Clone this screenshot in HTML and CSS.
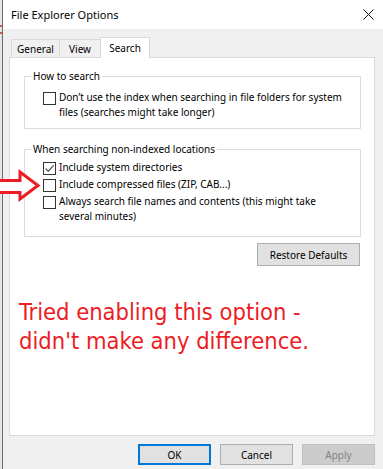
FILE: index.html
```html
<!DOCTYPE html>
<html>
<head>
<meta charset="utf-8">
<link rel="stylesheet" href="styles.css">
</head>
<body>
<div class="screen">
  <div class="strip"><span class="mark mark-a"></span><span class="mark mark-b"></span></div>
  <div class="window">
    <div class="titlebar">
      <span class="title">File Explorer Options</span>
      <svg class="close" viewBox="0 0 11 11" width="11" height="11"><path d="M0.5 0.5 L10.5 10.5 M10.5 0.5 L0.5 10.5" stroke="#111" stroke-width="1" fill="none"/></svg>
    </div>
    <div class="body">
      <div class="tabs">
        <div class="tab tab-general">General</div>
        <div class="tab tab-view">View</div>
        <div class="tab tab-search active">Search</div>
      </div>
      <div class="panel">
        <fieldset class="group g1">
          <legend>How to search</legend>
          <div class="opts">
            <div class="opt"><span class="cb"></span><span class="lbl">Don’t use the index when searching in file folders for system<br>files (searches might take longer)</span></div>
          </div>
        </fieldset>
        <fieldset class="group g2">
          <legend>When searching non-indexed locations</legend>
          <div class="opts">
            <div class="opt"><span class="cb checked"><svg viewBox="0 0 11 11" width="11" height="11"><path d="M1.5 5.5 L4.2 8.2 L9.6 2.4" stroke="#5a5a5a" stroke-width="1.3" fill="none"/></svg></span><span class="lbl">Include system directories</span></div>
            <div class="opt"><span class="cb"></span><span class="lbl">Include compressed files (ZIP, CAB...)</span></div>
            <div class="opt"><span class="cb"></span><span class="lbl">Always search file names and contents (this might take<br>several minutes)</span></div>
          </div>
        </fieldset>
        <div class="restore-row"><button class="btn restore">Restore Defaults</button></div>
        <p class="note">Tried enabling this option -<br>didn't make any difference.</p>
      </div>
      <div class="footer">
        <button class="btn ok">OK</button>
        <button class="btn">Cancel</button>
        <button class="btn disabled">Apply</button>
      </div>
    </div>
  </div>
  <svg class="arrow" viewBox="0 0 44 36" width="44" height="36"><polygon points="-3,12.5 20,12.5 20,4 38,17.5 20,31 20,24.5 -3,24.5" fill="#fff" stroke="#ed1c24" stroke-width="3" stroke-miterlimit="3"/></svg>
</div>
</body>
</html>
```
FILE: styles.css
```css
body {
  margin: 0;
  width: 383px;
  height: 469px;
  overflow: hidden;
  font-family: "Noto Sans", sans-serif;
  font-size: 10px;
  color: #000;
}
.screen {
  position: relative;
  display: flex;
  height: 469px;
  background: #e6e6e6;
}
.strip {
  width: 2px;
  flex: none;
  position: relative;
}
.mark {
  position: absolute;
  left: 0;
  width: 2px;
  height: 2px;
  background: #d9534f;
}
.mark-a { top: 25px; }
.mark-b { top: 32px; }
.window {
  flex: 1;
  display: flex;
  flex-direction: column;
  background: #f0f0f0;
  border-left: 1px solid #6d6d6d;
}
.titlebar {
  height: 29px;
  flex: none;
  background: #fff;
  display: flex;
  align-items: center;
  padding-left: 8px;
  font-size: 11px;
}
.close {
  margin-left: auto;
  margin-right: 9px;
}
.body {
  padding: 8px 8px 0 6px;
  display: flex;
  flex-direction: column;
}
.tabs {
  display: flex;
  align-items: flex-end;
  height: 20px;
  padding-left: 2px;
}
.tab {
  height: 18px;
  box-sizing: border-box;
  border: 1px solid #d9d9d9;
  border-bottom: none;
  background: #f0f0f0;
  display: flex;
  align-items: center;
  justify-content: center;
}
.tab-general { width: 49px; }
.tab-view { width: 41px; border-left: none; }
.tab-search { width: 50px; margin-left: -1px; }
.tab.active {
  height: 21px;
  margin-bottom: -1px;
  background: #fff;
  position: relative;
  z-index: 1;
}
.panel {
  height: 379px;
  box-sizing: border-box;
  border: 1px solid #d9d9d9;
  background: #fff;
  display: flex;
  flex-direction: column;
}
.group {
  margin: 0 13px 0 14px;
  border: 1px solid #dcdcdc;
  padding: 0;
  min-width: 0;
}
.g1 { margin-top: 11px; }
.g2 { margin-top: 13px; }
legend {
  padding: 0 2px;
  margin-left: 6px;
  line-height: 15px;
}
.opts {
  padding: 6px 0 8px 18px;
  display: flex;
  flex-direction: column;
  gap: 2px;
}
.g2 .opts { padding: 3px 0 12px 18px; }
.opt {
  display: flex;
  align-items: flex-start;
  line-height: 15px;
  white-space: nowrap;
}
.cb {
  width: 13px;
  height: 13px;
  box-sizing: border-box;
  border: 1px solid #333;
  background: #fff;
  margin-top: 2px;
  margin-right: 3px;
  flex: none;
  display: flex;
}
.restore-row {
  display: flex;
  justify-content: flex-end;
  margin: 6px 14px 0 0;
}
.btn {
  font: inherit;
  height: 23px;
  box-sizing: border-box;
  border: 1px solid #adadad;
  background: #e1e1e1;
  padding: 0;
  color: #000;
}
.restore { width: 103px; }
.note {
  margin: 32px 0 0 9px;
  color: #ed1c24;
  font-family: "DejaVu Sans Condensed", "DejaVu Sans", sans-serif;
  font-stretch: condensed;
  font-size: 23.5px;
  line-height: 29px;
}
.footer {
  display: flex;
  justify-content: flex-end;
  gap: 9px;
  margin-top: 8px;
}
.footer .btn {
  width: 73px;
  height: 21px;
}
.btn.ok { border: 2px solid #0078d7; }
.btn.disabled {
  background: #cccccc;
  border-color: #bfbfbf;
  color: #838383;
}
.arrow {
  position: absolute;
  left: 0;
  top: 168px;
  z-index: 2;
}
```
